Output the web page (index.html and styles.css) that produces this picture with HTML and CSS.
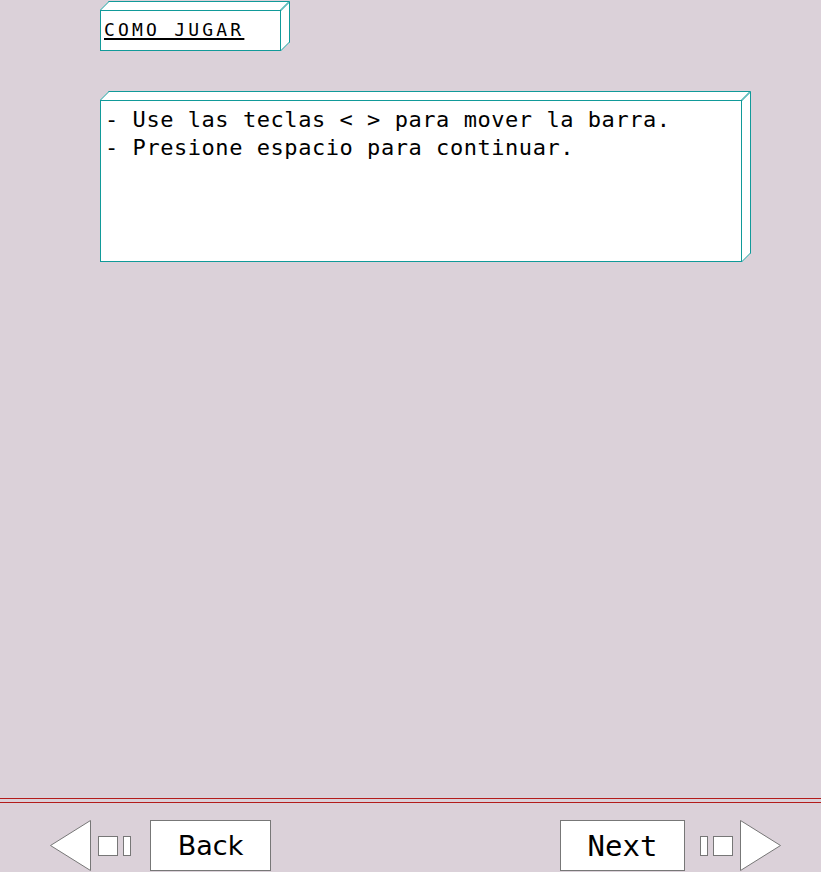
FILE: index.html
```html
<!DOCTYPE html>
<html lang="es">
<head>
<meta charset="utf-8">
<title>Como jugar</title>
<link rel="stylesheet" href="styles.css">
</head>
<body>
<main class="stage">
  <div class="box3d title-box">
    <span class="title">COMO JUGAR</span>
  </div>
  <div class="box3d panel">
    <p class="line">- Use las teclas &lt; &gt; para mover la barra.</p>
    <p class="line">- Presione espacio para continuar.</p>
  </div>
</main>
<div class="rule"></div>
<nav class="nav">
  <div class="group">
    <svg class="arrow" width="41" height="51" viewBox="0 0 41 51"><polygon points="0.5,25.5 40.5,0.5 40.5,50.5" fill="#fff" stroke="#777" stroke-width="1"/></svg>
    <span class="sq first-sq"></span>
    <span class="bar gap5"></span>
    <button class="btn back">Back</button>
  </div>
  <div class="group">
    <button class="btn next">Next</button>
    <span class="bar gap15"></span>
    <span class="sq gap5"></span>
    <svg class="arrow gap7" width="41" height="51" viewBox="0 0 41 51"><polygon points="0.5,0.5 40.5,25.5 0.5,50.5" fill="#fff" stroke="#777" stroke-width="1"/></svg>
  </div>
</nav>
</body>
</html>
```
FILE: styles.css
```css
html, body {
  margin: 0;
  padding: 0;
}
body {
  background: #dbd1d9;
  width: 821px;
  height: 872px;
  overflow: hidden;
}
.stage {
  box-sizing: border-box;
  height: 798px;
  padding: 10px 0 0 100px;
  display: flex;
  flex-direction: column;
  align-items: flex-start;
}
.box3d {
  position: relative;
  box-sizing: border-box;
  background: #fff;
  border: 1px solid #119a99;
}
.box3d::before {
  content: "";
  position: absolute;
  box-sizing: border-box;
  left: -1px;
  top: -10px;
  width: calc(100% + 2px);
  height: 9px;
  background: #fff;
  border: 1px solid #119a99;
  border-bottom: none;
  transform: skewX(-45deg);
  transform-origin: bottom left;
}
.box3d::after {
  content: "";
  position: absolute;
  box-sizing: border-box;
  left: calc(100% + 1px);
  top: -1px;
  width: 9px;
  height: calc(100% + 2px);
  background: #fff;
  border: 1px solid #119a99;
  border-left: none;
  transform: skewY(-45deg);
  transform-origin: top left;
}
.title-box {
  width: 181px;
  height: 41px;
  padding: 8px 0 0 3px;
}
.title {
  display: block;
  font-family: "DejaVu Sans Mono", monospace;
  font-size: 18px;
  line-height: 21px;
  letter-spacing: 3.2px;
  color: #000;
  text-decoration: underline;
  text-decoration-thickness: 2px;
  text-underline-offset: 2px;
}
.panel {
  margin-top: 49px;
  width: 642px;
  height: 162px;
  padding: 5px 0 0 4px;
}
.line {
  margin: 0;
  font-family: "DejaVu Sans Mono", monospace;
  font-size: 22px;
  line-height: 28px;
  letter-spacing: 0.55px;
  color: #000;
  white-space: pre;
}
.rule {
  height: 3px;
  border-top: 1px solid #b31b1b;
  border-bottom: 1px solid #b31b1b;
}
.nav {
  display: flex;
  justify-content: space-between;
  align-items: center;
  padding: 17px 40px 0 50px;
}
.group {
  display: flex;
  align-items: center;
}
.arrow {
  display: block;
}
.sq {
  box-sizing: border-box;
  width: 20px;
  height: 20px;
  background: #fff;
  border: 1px solid #777;
}
.bar {
  box-sizing: border-box;
  width: 8px;
  height: 20px;
  background: #fff;
  border: 1px solid #777;
}
.first-sq { margin-left: 7px; }
.gap5 { margin-left: 5px; }
.gap7 { margin-left: 7px; }
.gap15 { margin-left: 15px; }
.btn {
  box-sizing: border-box;
  height: 51px;
  background: #fff;
  border: 1px solid #777;
  border-radius: 0;
  padding: 0;
  color: #000;
}
.back {
  width: 121px;
  margin-left: 19px;
  font-family: "DejaVu Sans", sans-serif;
  font-size: 27px;
}
.next {
  width: 125px;
  font-family: "DejaVu Sans Mono", monospace;
  font-size: 29px;
}
```
